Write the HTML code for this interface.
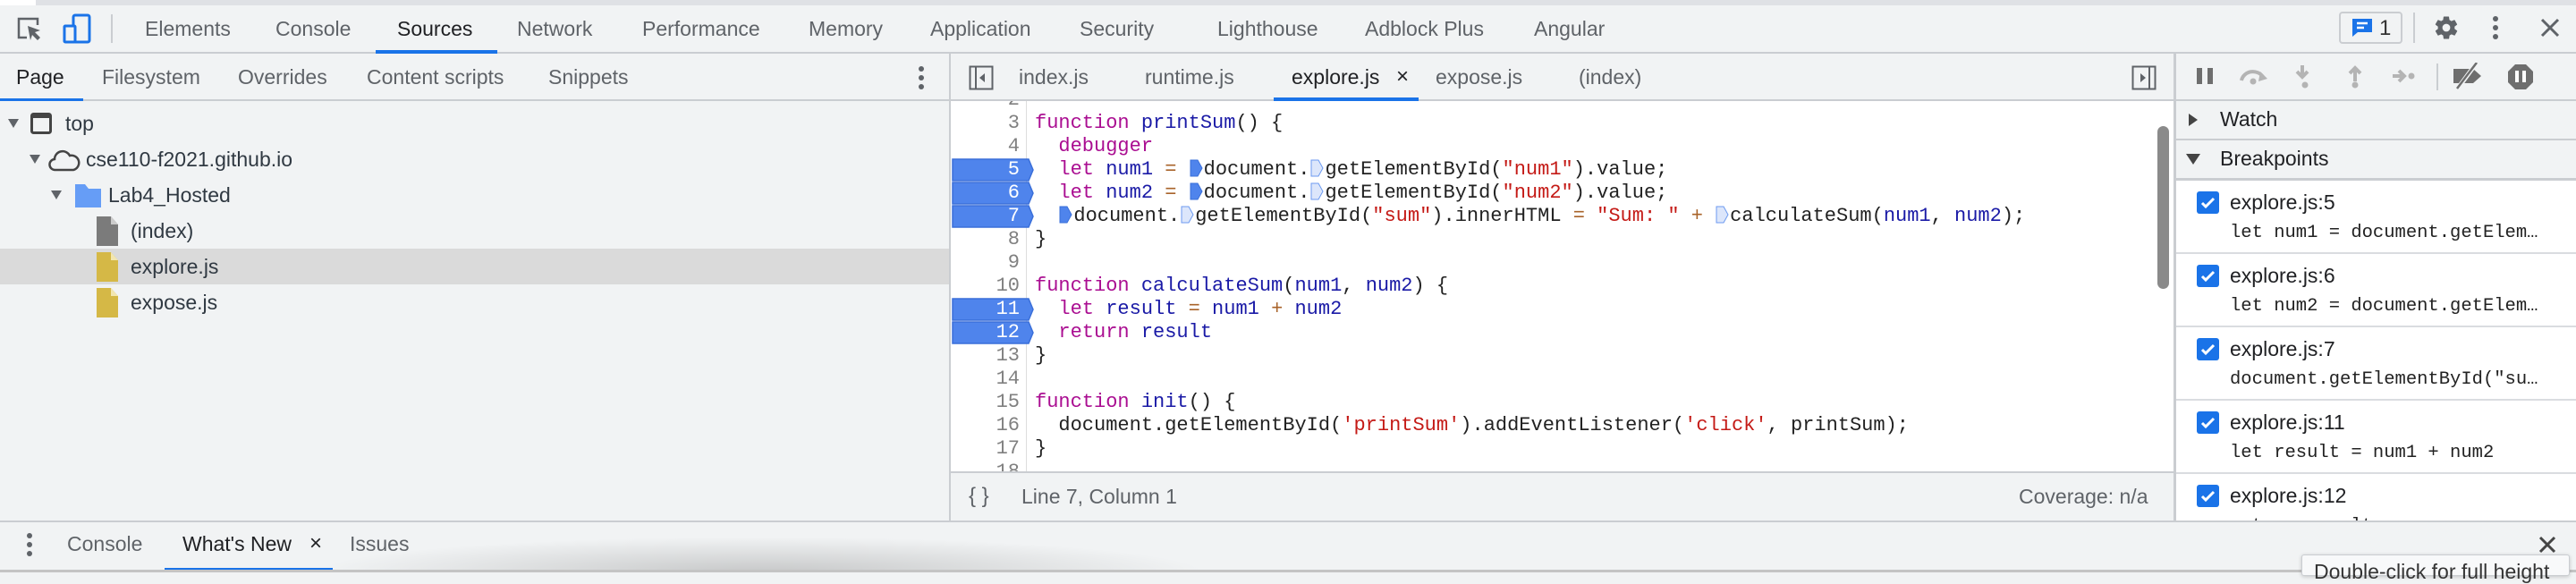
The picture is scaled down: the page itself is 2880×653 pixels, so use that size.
<!DOCTYPE html>
<html><head><meta charset="utf-8"><style>
*{margin:0;padding:0;box-sizing:border-box}
body{width:2880px;height:640px;overflow:hidden;background:#f1f3f4;font-family:"Liberation Sans",sans-serif;position:relative;color:#303942}
.a{position:absolute;white-space:nowrap}
.t{font-size:23px;color:#5f6368;line-height:1}
.mono{font-family:"Liberation Mono",monospace}
.code{font-size:22px;line-height:26px;color:#222}
.code div{height:26px}
.k{color:#aa0d91}.v{color:#1a1aa6}.s{color:#c41a16}.o{color:#a8632a}
.im{display:inline-block;width:15px;height:20px;vertical-align:-3px;margin:0 1px}
</style></head><body>
<div class="a" style="left:0;top:0;width:2880px;height:6px;background:#dfe1e5"></div>
<div class="a" style="left:0;top:0;width:40px;height:6px;background:#fff"></div>
<div class="a" style="left:0;top:6px;width:2880px;height:52px;background:#f1f3f4"></div>
<div class="a" style="left:0;top:58px;width:2880px;height:2px;background:#cacdd1"></div>
<svg class="a" style="left:18px;top:18px" width="32" height="30" viewBox="0 0 32 30"><path d="M12 24H3V3h21v7" fill="none" stroke="#5f6368" stroke-width="2.5"/><path d="M13 11l14 5-6 2 6 6-3 3-6-6-2 6z" fill="#5f6368"/></svg>
<svg class="a" style="left:70px;top:15px" width="32" height="34" viewBox="0 0 32 34"><rect x="12" y="2" width="18" height="30" rx="2" fill="none" stroke="#1a73e8" stroke-width="3"/><rect x="2" y="14" width="12" height="18" rx="1" fill="#f1f3f4" stroke="#1a73e8" stroke-width="3"/></svg>
<div class="a" style="left:124px;top:16px;width:2px;height:32px;background:#cacdd1"></div>
<div class="a t" style="left:162px;top:21px">Elements</div>
<div class="a t" style="left:308px;top:21px">Console</div>
<div class="a t" style="left:444px;top:21px;color:#202124">Sources</div>
<div class="a" style="left:420px;top:56px;width:136px;height:4px;background:#1a73e8"></div>
<div class="a t" style="left:578px;top:21px">Network</div>
<div class="a t" style="left:718px;top:21px">Performance</div>
<div class="a t" style="left:904px;top:21px">Memory</div>
<div class="a t" style="left:1040px;top:21px">Application</div>
<div class="a t" style="left:1207px;top:21px">Security</div>
<div class="a t" style="left:1361px;top:21px">Lighthouse</div>
<div class="a t" style="left:1526px;top:21px">Adblock Plus</div>
<div class="a t" style="left:1715px;top:21px">Angular</div>
<div class="a" style="left:2615px;top:13px;width:71px;height:36px;border:2px solid #cacdd1;border-radius:4px"></div>
<svg class="a" style="left:2628px;top:19px" width="26" height="24" viewBox="0 0 26 24"><path d="M2 2h22v15H8l-6 5z" fill="#1a73e8"/><path d="M7 7h12M7 12h8" stroke="#fff" stroke-width="2.5"/></svg>
<div class="a t" style="left:2660px;top:20px;color:#333;font-size:24px">1</div>
<div class="a" style="left:2698px;top:14px;width:2px;height:34px;background:#cacdd1"></div>
<svg class="a" style="left:2720px;top:16px" width="30" height="30" viewBox="0 0 24 24"><path fill="#5f6368" d="M19.4 13c.04-.33.06-.66.06-1s-.02-.67-.06-1l2.1-1.6c.2-.15.25-.42.12-.64l-2-3.46c-.12-.22-.39-.3-.61-.22l-2.5 1c-.52-.4-1.080-.73-1.7-.98l-.37-2.65A.5.5 0 0 0 14 2h-4c-.25 0-.46.18-.5.42l-.37 2.65c-.62.25-1.18.58-1.7.98l-2.5-1c-.22-.08-.49 0-.61.22l-2 3.46c-.13.22-.07.49.12.64L4.56 11c-.04.33-.06.67-.06 1s.02.67.06 1l-2.1 1.6c-.2.15-.25.42-.12.64l2 3.460c.12.22.39.3.61.22l2.5-1c.52.4 1.08.73 1.7.98l.37 2.65c.04.24.25.42.5.42h4c.25 0 .46-.18.5-.42l.37-2.65c.62-.25 1.18-.58 1.7-.98l2.5 1c.22.08.49 0 .61-.22l2-3.46c.12-.22.07-.49-.12-.64zM12 15.5A3.5 3.5 0 1 1 12 8.5a3.5 3.5 0 0 1 0 7z"/></svg>
<svg class="a" style="left:2784px;top:16px" width="12" height="30"><circle cx="6" cy="5" r="3" fill="#5f6368"/><circle cx="6" cy="15" r="3" fill="#5f6368"/><circle cx="6" cy="25" r="3" fill="#5f6368"/></svg>
<svg class="a" style="left:2840px;top:20px" width="22" height="22"><path d="M2 2l18 18M20 2L2 20" stroke="#5f6368" stroke-width="3"/></svg>

<div class="a" style="left:0;top:60px;width:1062px;height:52px;background:#f1f3f4"></div>
<div class="a" style="left:0;top:111px;width:1062px;height:2px;background:#cacdd1"></div>
<div class="a t" style="left:18px;top:75px;color:#202124">Page</div>
<div class="a" style="left:0;top:110px;width:93px;height:4px;background:#1a73e8"></div>
<div class="a t" style="left:114px;top:75px">Filesystem</div>
<div class="a t" style="left:266px;top:75px">Overrides</div>
<div class="a t" style="left:410px;top:75px">Content scripts</div>
<div class="a t" style="left:613px;top:75px">Snippets</div>
<svg class="a" style="left:1024px;top:72px" width="12" height="30"><circle cx="6" cy="5" r="3" fill="#5f6368"/><circle cx="6" cy="15" r="3" fill="#5f6368"/><circle cx="6" cy="25" r="3" fill="#5f6368"/></svg>
<div class="a" style="left:0;top:113px;width:1062px;height:469px;background:#f1f3f4"></div>
<div class="a" style="left:0;top:278px;width:1062px;height:40px;background:#dadada"></div>
<svg class="a" style="left:9px;top:132px" width="12" height="12"><path d="M0 1h12L6 11z" fill="#5f6368"/></svg>
<svg class="a" style="left:34px;top:126px" width="24" height="24"><rect x="1.5" y="1.5" width="21" height="21" rx="2" fill="none" stroke="#444" stroke-width="3"/><rect x="1" y="1" width="22" height="5" fill="#444"/></svg>
<div class="a t" style="left:73px;top:127px;color:#303942">top</div>
<svg class="a" style="left:33px;top:172px" width="12" height="12"><path d="M0 1h12L6 11z" fill="#5f6368"/></svg>
<svg class="a" style="left:54px;top:166px" width="36" height="26" viewBox="0 0 36 26"><path d="M8 24a6 6 0 0 1-1-12 9 9 0 0 1 17-4 7 7 0 0 1 4 16z" fill="none" stroke="#444" stroke-width="2.5"/></svg>
<div class="a t" style="left:96px;top:167px;color:#303942">cse110-f2021.github.io</div>
<svg class="a" style="left:57px;top:212px" width="12" height="12"><path d="M0 1h12L6 11z" fill="#5f6368"/></svg>
<svg class="a" style="left:84px;top:206px" width="29" height="26"><path d="M0 0h11l4 5h14v21H0z" fill="#669df6"/></svg>
<div class="a t" style="left:121px;top:207px;color:#303942">Lab4_Hosted</div>
<svg class="a" style="left:108px;top:242px" width="24" height="33"><path d="M0 0h16l8 9v24H0z" fill="#7b7b7b"/><path d="M16 0v9h8" fill="#ccc"/></svg>
<div class="a t" style="left:146px;top:247px;color:#303942">(index)</div>
<svg class="a" style="left:108px;top:282px" width="24" height="33"><path d="M0 0h16l8 9v24H0z" fill="#d5b846"/><path d="M16 0v9h8" fill="#f2e6b0"/></svg>
<div class="a t" style="left:146px;top:287px;color:#303942">explore.js</div>
<svg class="a" style="left:108px;top:322px" width="24" height="33"><path d="M0 0h16l8 9v24H0z" fill="#d5b846"/><path d="M16 0v9h8" fill="#f2e6b0"/></svg>
<div class="a t" style="left:146px;top:327px;color:#303942">expose.js</div>
<div class="a" style="left:1061px;top:60px;width:2px;height:522px;background:#cacdd1"></div>

<div class="a" style="left:1063px;top:60px;width:1367px;height:51px;background:#f1f3f4"></div>
<div class="a" style="left:1063px;top:111px;width:1367px;height:2px;background:#cacdd1"></div>
<svg class="a" style="left:1083px;top:73px" width="28" height="28"><rect x="1.5" y="1.5" width="25" height="25" fill="none" stroke="#5f6368" stroke-width="2"/><path d="M8 2v24" stroke="#5f6368" stroke-width="2"/><path d="M18 9l-6 5 6 5z" fill="#5f6368"/></svg>
<div class="a t" style="left:1139px;top:75px">index.js</div>
<div class="a t" style="left:1280px;top:75px">runtime.js</div>
<div class="a t" style="left:1444px;top:75px;color:#202124">explore.js</div>
<div class="a t" style="left:1561px;top:74px;color:#202124;font-size:24px">×</div>
<div class="a" style="left:1424px;top:109px;width:162px;height:4px;background:#1a73e8"></div>
<div class="a t" style="left:1605px;top:75px">expose.js</div>
<div class="a t" style="left:1765px;top:75px">(index)</div>
<svg class="a" style="left:2383px;top:73px" width="28" height="28"><rect x="1.5" y="1.5" width="25" height="25" fill="none" stroke="#5f6368" stroke-width="2"/><path d="M20 2v24" stroke="#5f6368" stroke-width="2"/><path d="M10 9l6 5-6 5z" fill="#5f6368"/></svg>

<div class="a" style="left:1063px;top:113px;width:1367px;height:414px;background:#fff;overflow:hidden">
 <div class="a" style="left:84px;top:0;width:1px;height:414px;background:#ddd"></div>
 <svg class="a" style="left:0;top:0" width="100" height="414">
  <g fill="#4f84ec" stroke="#3a6fd9" stroke-width="1.5">
   <path d="M2 65h85l5 12-5 12H2z"/>
   <path d="M2 91h85l5 12-5 12H2z"/>
   <path d="M2 117h85l5 12-5 12H2z"/>
   <path d="M2 221h85l5 12-5 12H2z"/>
   <path d="M2 247h85l5 12-5 12H2z"/>
  </g>
 </svg>
 <div class="a mono code" style="left:0;top:-14px;width:77px;text-align:right;color:#808080">
  <div>2</div><div>3</div><div>4</div><div style="color:#fff">5</div><div style="color:#fff">6</div><div style="color:#fff">7</div><div>8</div><div>9</div><div>10</div><div style="color:#fff">11</div><div style="color:#fff">12</div><div>13</div><div>14</div><div>15</div><div>16</div><div>17</div><div>18</div>
 </div>
 <div class="a mono code" style="left:94px;top:-14px;white-space:pre"><div>&nbsp;</div><div><span class="k">function</span> <span class="v">printSum</span>() {</div><div>  <span class="k">debugger</span></div><div>  <span class="k">let</span> <span class="v">num1</span> <span class="o">=</span> <svg class="im" viewBox="0 0 15 20"><path d="M1 1h8l5 9-5 9H1z" fill="#4f84ec" stroke="#3a6fd9"/></svg>document.<svg class="im" viewBox="0 0 15 20"><path d="M1 1h8l5 9-5 9H1z" fill="#dce6fb" stroke="#6c9af0"/></svg>getElementById(<span class="s">"num1"</span>).value;</div><div>  <span class="k">let</span> <span class="v">num2</span> <span class="o">=</span> <svg class="im" viewBox="0 0 15 20"><path d="M1 1h8l5 9-5 9H1z" fill="#4f84ec" stroke="#3a6fd9"/></svg>document.<svg class="im" viewBox="0 0 15 20"><path d="M1 1h8l5 9-5 9H1z" fill="#dce6fb" stroke="#6c9af0"/></svg>getElementById(<span class="s">"num2"</span>).value;</div><div>  <svg class="im" viewBox="0 0 15 20"><path d="M1 1h8l5 9-5 9H1z" fill="#4f84ec" stroke="#3a6fd9"/></svg>document.<svg class="im" viewBox="0 0 15 20"><path d="M1 1h8l5 9-5 9H1z" fill="#dce6fb" stroke="#6c9af0"/></svg>getElementById(<span class="s">"sum"</span>).innerHTML <span class="o">=</span> <span class="s">"Sum: "</span> <span class="o">+</span> <svg class="im" viewBox="0 0 15 20"><path d="M1 1h8l5 9-5 9H1z" fill="#dce6fb" stroke="#6c9af0"/></svg>calculateSum(<span class="v">num1</span>, <span class="v">num2</span>);</div><div>}</div><div>&nbsp;</div><div><span class="k">function</span> <span class="v">calculateSum</span>(<span class="v">num1</span>, <span class="v">num2</span>) {</div><div>  <span class="k">let</span> <span class="v">result</span> <span class="o">=</span> <span class="v">num1</span> <span class="o">+</span> <span class="v">num2</span></div><div>  <span class="k">return</span> <span class="v">result</span></div><div>}</div><div>&nbsp;</div><div><span class="k">function</span> <span class="v">init</span>() {</div><div>  document.getElementById(<span class="s">'printSum'</span>).addEventListener(<span class="s">'click'</span>, printSum);</div><div>}</div><div>&nbsp;</div></div>
 <div class="a" style="left:1349px;top:28px;width:13px;height:182px;background:#8a8a8a;border-radius:7px"></div>
</div>
<div class="a" style="left:1063px;top:527px;width:1367px;height:2px;background:#cacdd1"></div>
<div class="a t" style="left:1083px;top:543px;font-size:24px">{ }</div>
<div class="a t" style="left:1142px;top:544px">Line 7, Column 1</div>
<div class="a t" style="left:2257px;top:544px">Coverage: n/a</div>

<div class="a" style="left:2430px;top:60px;width:3px;height:522px;background:#cacdd1"></div>
<div class="a" style="left:2433px;top:111px;width:447px;height:2px;background:#cacdd1"></div>
<svg class="a" style="left:2450px;top:70px" width="400" height="32" viewBox="2450 70 400 32">
 <rect x="2456" y="76" width="6" height="18" fill="#6e6e6e"/><rect x="2468" y="76" width="6" height="18" fill="#6e6e6e"/>
 <path d="M2506 90a13 12 0 0 1 24 -4" fill="none" stroke="#b4b4b4" stroke-width="4"/><path d="M2527 80l8 8-10 3z" fill="#b4b4b4"/><circle cx="2519" cy="91" r="3.5" fill="#b4b4b4"/>
 <path d="M2574 73v10M2568 80l6 6 6-6" stroke="#b4b4b4" stroke-width="4" fill="none"/><circle cx="2577" cy="95" r="3.5" fill="#b4b4b4"/>
 <path d="M2633 91v-12M2627 82l6-6 6 6" stroke="#b4b4b4" stroke-width="4" fill="none"/><circle cx="2633" cy="95" r="3.5" fill="#b4b4b4"/>
 <path d="M2675 85h10M2682 79l6 6-6 6" stroke="#b4b4b4" stroke-width="4" fill="none"/><circle cx="2696" cy="85" r="3.5" fill="#b4b4b4"/>
 <rect x="2724" y="71" width="2" height="30" fill="#cacdd1"/>
 <path d="M2743 77h22l9 8-9 8h-22z" fill="#6e6e6e"/><path d="M2747 100l22-30" stroke="#f1f3f4" stroke-width="5"/><path d="M2747 99l22-29" stroke="#6e6e6e" stroke-width="2.5"/>
 <path d="M2812 72h12l8 8v12l-8 8h-12l-8-8v-12z" fill="#6e6e6e"/><rect x="2812" y="79" width="4" height="13" fill="#fff"/><rect x="2820" y="79" width="4" height="13" fill="#fff"/>
</svg>
<div class="a" style="left:2433px;top:113px;width:447px;height:42px;background:#f1f3f4"></div>
<svg class="a" style="left:2446px;top:127px" width="12" height="14"><path d="M1 0v14l10-7z" fill="#444"/></svg>
<div class="a t" style="left:2482px;top:122px;color:#202124">Watch</div>
<div class="a" style="left:2433px;top:155px;width:447px;height:2px;background:#cacdd1"></div>
<div class="a" style="left:2433px;top:157px;width:447px;height:42px;background:#f1f3f4"></div>
<svg class="a" style="left:2444px;top:172px" width="16" height="12"><path d="M0 0h16l-8 12z" fill="#444"/></svg>
<div class="a t" style="left:2482px;top:166px;color:#202124">Breakpoints</div>
<div class="a" style="left:2433px;top:199px;width:447px;height:3px;background:#cacdd1"></div>
<div class="a" style="left:2433px;top:202px;width:447px;height:380px;background:#fff;overflow:hidden">
 <div style="position:absolute;left:0;top:0;width:447px;height:82px;border-bottom:2px solid #dadce0"></div>
 <div style="position:absolute;left:0;top:82px;width:447px;height:82px;border-bottom:2px solid #dadce0"></div>
 <div style="position:absolute;left:0;top:164px;width:447px;height:82px;border-bottom:2px solid #dadce0"></div>
 <div style="position:absolute;left:0;top:246px;width:447px;height:82px;border-bottom:2px solid #dadce0"></div>
 <div class="a" style="left:23px;top:12px;width:25px;height:25px;background:#1a73e8;border-radius:3px"><svg width="25" height="25"><path d="M6 13l4 4 9-9" stroke="#fff" stroke-width="3" fill="none"/></svg></div>
 <div class="a t" style="left:60px;top:13px;color:#202124">explore.js:5</div>
 <div class="a mono" style="left:60px;top:47px;font-size:20.5px;color:#222">let num1 = document.getElem…</div>
 <div class="a" style="left:23px;top:94px;width:25px;height:25px;background:#1a73e8;border-radius:3px"><svg width="25" height="25"><path d="M6 13l4 4 9-9" stroke="#fff" stroke-width="3" fill="none"/></svg></div>
 <div class="a t" style="left:60px;top:95px;color:#202124">explore.js:6</div>
 <div class="a mono" style="left:60px;top:129px;font-size:20.5px;color:#222">let num2 = document.getElem…</div>
 <div class="a" style="left:23px;top:176px;width:25px;height:25px;background:#1a73e8;border-radius:3px"><svg width="25" height="25"><path d="M6 13l4 4 9-9" stroke="#fff" stroke-width="3" fill="none"/></svg></div>
 <div class="a t" style="left:60px;top:177px;color:#202124">explore.js:7</div>
 <div class="a mono" style="left:60px;top:211px;font-size:20.5px;color:#222">document.getElementById("su…</div>
 <div class="a" style="left:23px;top:258px;width:25px;height:25px;background:#1a73e8;border-radius:3px"><svg width="25" height="25"><path d="M6 13l4 4 9-9" stroke="#fff" stroke-width="3" fill="none"/></svg></div>
 <div class="a t" style="left:60px;top:259px;color:#202124">explore.js:11</div>
 <div class="a mono" style="left:60px;top:293px;font-size:20.5px;color:#222">let result = num1 + num2</div>
 <div class="a" style="left:23px;top:340px;width:25px;height:25px;background:#1a73e8;border-radius:3px"><svg width="25" height="25"><path d="M6 13l4 4 9-9" stroke="#fff" stroke-width="3" fill="none"/></svg></div>
 <div class="a t" style="left:60px;top:341px;color:#202124">explore.js:12</div>
 <div class="a mono" style="left:60px;top:375px;font-size:20.5px;color:#222">return result</div>
</div>

<div class="a" style="left:0;top:582px;width:2880px;height:2px;background:#cacdd1"></div>
<div class="a" style="left:0;top:584px;width:2880px;height:53px;background:#f1f3f4"></div>
<div class="a" style="left:350px;top:600px;width:1000px;height:40px;background:radial-gradient(ellipse at 50% 100%,rgba(120,120,120,.35),rgba(241,243,244,0) 70%)"></div>
<svg class="a" style="left:27px;top:594px" width="12" height="30"><circle cx="6" cy="5" r="3" fill="#5f6368"/><circle cx="6" cy="15" r="3" fill="#5f6368"/><circle cx="6" cy="25" r="3" fill="#5f6368"/></svg>
<div class="a t" style="left:75px;top:597px">Console</div>
<div class="a t" style="left:204px;top:597px;color:#202124">What's New</div>
<div class="a t" style="left:346px;top:596px;color:#202124;font-size:24px">×</div>
<div class="a" style="left:184px;top:635px;width:188px;height:4px;background:#1a73e8"></div>
<div class="a t" style="left:391px;top:597px">Issues</div>
<svg class="a" style="left:2838px;top:599px" width="20" height="20"><path d="M2 2l16 16M18 2L2 18" stroke="#444" stroke-width="3"/></svg>
<div class="a" style="left:0;top:637px;width:2880px;height:3px;background:#c4c4c4"></div>
<div class="a" style="left:2573px;top:620px;width:300px;height:24px;background:#f8f9fa;border:1.5px solid #cacdd1;border-radius:3px;box-shadow:0 1px 4px rgba(0,0,0,.2)"></div>
<div class="a" style="left:2587px;top:626px;font-size:23px;color:#333">Double-click for full height</div>
</body></html>
